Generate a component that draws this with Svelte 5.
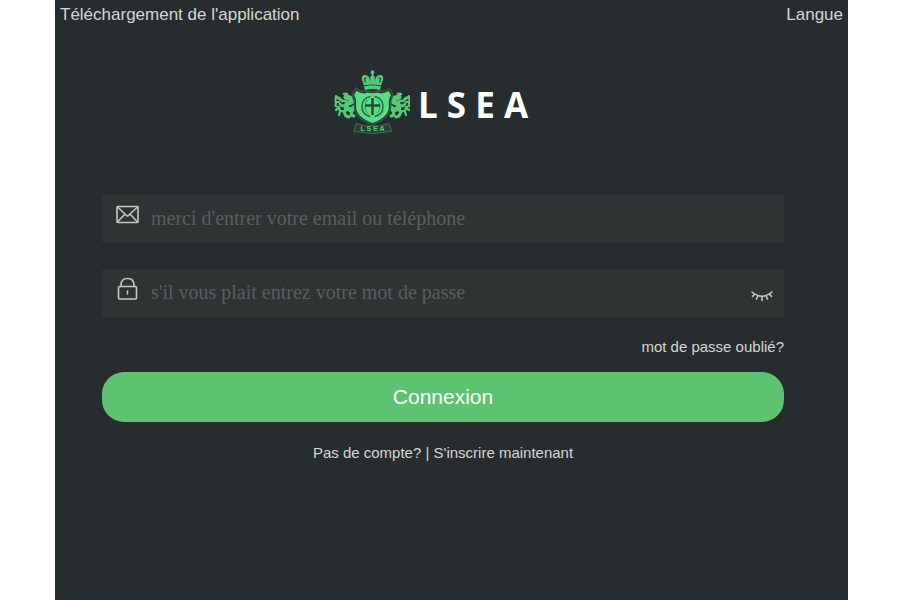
<script>
  let account = $state('');
  let password = $state('');
  let visible = $state(false);
</script>

<div class="page">
  <header>
    <a href="#download">Téléchargement de l'application</a>
    <a href="#language">Langue</a>
  </header>

  <main>
    <div class="brand">
      <svg class="crest" viewBox="0 0 76 66" aria-hidden="true">
        <defs>
          <g id="lion" fill="none" stroke="#54cb79" stroke-linecap="round" stroke-linejoin="round">
            <path d="M12 27 L16 28 L17 32 L13 34 L12 38 L17 40 L21 37" stroke-width="5" />
            <path d="M12 31 L8 31 L5 28 M12 35 L8 36 L6 34" stroke-width="2.6" />
            <path d="M13 39 L10 42 L12 46 L15 47 M18 41 L17 45 L20 46" stroke-width="3" />
            <path d="M10 41 L6 41 L5 37 L1.500 36 L2 32 L5 32 M5 38 L2 40 M1.500 31 L2 26 L5 29 M6 42 L5 45" stroke-width="2.200" />
            <path d="M10 24 L13 24 M18 33 L22 30" stroke-width="2.400" />
          </g>
        </defs>
        <use href="#lion" />
        <use href="#lion" transform="translate(77 0) scale(-1 1)" />

        <g fill="#54cb79">
          <circle cx="38.500" cy="2.200" r="1.900" />
          <path d="M37.500 3 H39.500 V7 H37.500 Z" />
          <path d="M30 15.500 L28 10 Q27 6 30 5 Q34 4.500 35.500 8 L36 12 L36.500 6 H40.500 L41 12 L41.500 8 Q43 4.500 47 5 Q50 6 49 10 L47 15.500 Q38.500 13.500 30 15.500 Z" />
          <path d="M30 16.500 Q38.500 14 47 16.500 L46 20 Q38.500 18 31 20 Z" />
        </g>
        <path d="M31.500 12.500 L30.500 9 Q30.500 7.500 32.500 8 M45.500 12.500 L46.500 9 Q46.500 7.500 44.500 8" fill="none" stroke="#272d2e" />

        <path d="M22 17.500 Q27 23 32 20.500 Q38.500 22.500 45 20.500 Q50 23 55 17.500 L59 24 Q56 29 57 36 Q57 48 38.500 55 Q20 48 20 36 Q21 29 18 24 Z" fill="#29412f" stroke="#326846" />
        <path d="M22.500 21 Q29 25 33 22.500 Q38.500 24 44 22.500 Q48 25 54.500 21 L57 25 Q54 30 55 36 Q55 47 38.500 53 Q22 47 22 36 Q23 30 20 25 Z" fill="#5ade85" />
        <g fill="none" stroke="#2b6c43">
          <path d="M36.500 26.500 Q28 28 28 36.500 Q28 45 36.500 46.500 M40.500 26.500 Q49 28 49 36.500 Q49 45 40.500 46.500" stroke-width="1.600" />
          <path d="M34 29.500 Q31 32 31 36.500 Q31 41 34 43.500 M43 29.500 Q46 32 46 36.500 Q46 41 43 43.500" stroke="#3b9058" stroke-width="1" />
          <path d="M38.500 28 V45 M31 35.500 H46" stroke="#244c33" stroke-width="2.500" />
        </g>
        <path d="M22 53.500 Q38.500 59 55 53.500 L58 61 L52 62 Q38.500 65 25 62 L20 61.500 Z" fill="#293f32" stroke="#38764d" />
        <text x="38.500" y="61" text-anchor="middle">L S E A</text>
      </svg>
      <span class="name">L S E A</span>
    </div>

    <form onsubmit={(e) => e.preventDefault()}>
      <div class="field">
        <label for="account" aria-label="Email ou téléphone">
          <svg width="24" height="24" viewBox="0 0 24 24" aria-hidden="true">
            <rect x="1" y="3.500" width="21" height="16" rx="1" />
            <path d="M1.500 4 L10 12 Q11.500 14 13 12 L21.500 4 M1.500 19 L8.500 11.500 M21.500 19 L14.500 11.500" />
          </svg>
        </label>
        <input id="account" type="text" bind:value={account} placeholder="merci d'entrer votre email ou téléphone" />
      </div>

      <div class="field">
        <label for="password" aria-label="Mot de passe">
          <svg width="24" height="24" viewBox="0 0 24 24" aria-hidden="true">
            <rect x="2.500" y="9.500" width="18" height="12.500" rx="1" />
            <path d="M5 9.500 V8 Q5 1.500 11.500 1.500 Q18 1.500 18 8 V9.500 M11.500 14 V17" />
          </svg>
        </label>
        <input id="password" type={visible ? 'text' : 'password'} bind:value={password} placeholder="s'il vous plait entrez votre mot de passe" />
        <button class="eye" type="button" aria-label="Afficher le mot de passe" aria-pressed={visible} onclick={() => (visible = !visible)}>
          <svg width="22" height="12" viewBox="0 0 22 12" aria-hidden="true">
            <path d="M1 2 Q11 10.500 21 2 M3.500 4 L1.500 6.500 M7 5.500 L5.500 9 M11 6.500 V10.500 M15 5.500 L16.500 9 M18.500 4 L20.500 6.500" />
          </svg>
        </button>
      </div>

      <a class="forgot" href="#forgot">mot de passe oublié?</a>
      <button class="submit" type="submit">Connexion</button>
      <p>Pas de compte? | <a href="#register">S'inscrire maintenant</a></p>
    </form>
  </main>
</div>

<style>
  :global(body) {
    margin: 0;
    background: #fff;
  }

  .page {
    box-sizing: border-box;
    min-height: 100vh;
    margin: 0 52px 0 55px;
    background: #272d2e;
    color: #d5d6d6;
    font-family: "Liberation Sans", Arial, sans-serif;
    font-size: 15px;
  }

  a {
    color: inherit;
    text-decoration: none;
  }

  header {
    display: flex;
    justify-content: space-between;
    padding: 5px 5px 3px;
    font-size: 17px;
    line-height: 20px;
  }

  main {
    padding: 42px 64px 0 47px;
  }

  .brand {
    display: flex;
    justify-content: center;
    align-items: center;
    gap: 8px;
    height: 66px;
    margin-right: 24px;
  }

  .crest {
    width: 76px;
    height: 66px;
  }

  .crest text {
    fill: #55c979;
    font: bold 7px "Liberation Sans", sans-serif;
  }

  .name {
    padding-top: 4px;
    color: #fff;
    font: bold 35px/48px "Open Sans", sans-serif;
  }

  form {
    display: flex;
    flex-direction: column;
    margin-top: 59px;
  }

  .field {
    display: flex;
    align-items: center;
    height: 48px;
    margin-bottom: 26px;
    padding: 0 11px 0 14px;
    background: #2e3434;
  }

  label {
    display: flex;
    height: 32px;
  }

  svg {
    display: block;
  }

  label svg,
  .eye svg {
    fill: none;
    stroke: #c6c8c8;
    stroke-width: 1.6px;
    stroke-linecap: round;
    stroke-linejoin: round;
  }

  input {
    flex: 1;
    min-width: 0;
    padding: 0 0 2px 11px;
    border: 0;
    background: none;
    color: #d5d6d6;
    font: 20px/24px "Liberation Serif", "Times New Roman", serif;
  }

  input::placeholder {
    color: #595e5e;
    opacity: 1;
  }

  button {
    border: 0;
    padding: 0;
    cursor: pointer;
  }

  .eye {
    padding-top: 5px;
    background: none;
  }

  .forgot {
    align-self: flex-end;
    margin-top: -6px;
    line-height: 20px;
  }

  .submit {
    height: 50px;
    margin-top: 15px;
    border-radius: 22px;
    background: #5dc370;
    color: #fff;
    font: 21px/26px "Liberation Sans", Arial, sans-serif;
  }

  p {
    margin: 21px 0 0;
    text-align: center;
    line-height: 20px;
  }
</style>
